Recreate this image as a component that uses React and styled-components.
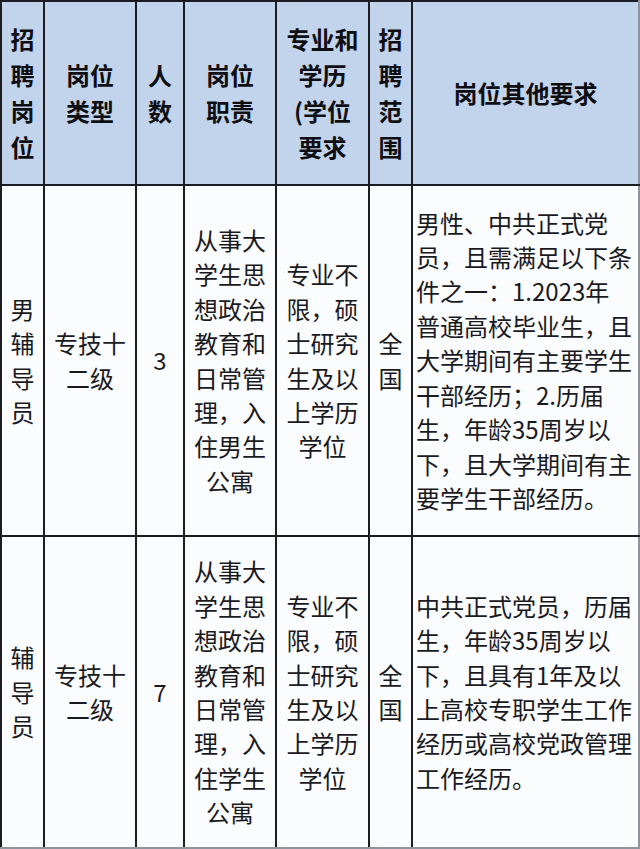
import React from "react";
import styled, { createGlobalStyle } from "styled-components";

const GlobalStyle = createGlobalStyle`
  html, body {
    margin: 0;
    padding: 0;
    background: #ffffff;
  }
  body {
    font-family: "Noto Sans CJK SC", "Noto Sans", sans-serif;
  }
`;

const Table = styled.table`
  width: 638px;
  border-collapse: collapse;
  table-layout: fixed;
  margin: 0;
`;

const HeadRow = styled.tr`
  height: 184px;
  background: #c2d3ec;
`;

const BodyRow = styled.tr`
  height: ${(p) => p.$h}px;
  background: #fbfcfe;
`;

const Th = styled.th`
  border: 2px solid #1c1c22;
  padding: 0;
  font-size: 24px;
  line-height: 36px;
  font-weight: 700;
  color: #0e0e12;
  text-align: center;
  vertical-align: middle;

  &:last-child {
    border-right-color: #8e939c;
  }
`;

const Td = styled.td`
  border: 2px solid #1c1c22;
  padding: 0;
  padding-left: ${(p) => (p.$left ? "3px" : "0")};
  font-size: 24px;
  line-height: 34.4px;
  font-weight: 400;
  color: #1a1a1e;
  text-align: ${(p) => (p.$left ? "left" : "center")};
  vertical-align: middle;
  white-space: nowrap;

  &:last-child {
    border-right-color: #8e939c;
  }

  tr:last-child > & {
    border-bottom-color: #8e939c;
  }
`;

const Line = styled.span`
  display: block;
`;

const Lines = ({ items }) => items.map((t, i) => <Line key={i}>{t}</Line>);

const widths = [43, 92, 48, 92, 93, 43, 227];

const headers = [
  ["招", "聘", "岗", "位"],
  ["岗位", "类型"],
  ["人", "数"],
  ["岗位", "职责"],
  ["专业和", "学历", "(学位", "要求"],
  ["招", "聘", "范", "围"],
  ["岗位其他要求"],
];

const rows = [
  {
    h: 351,
    cells: [
      ["男", "辅", "导", "员"],
      ["专技十", "二级"],
      ["3"],
      ["从事大", "学生思", "想政治", "教育和", "日常管", "理，入", "住男生", "公寓"],
      ["专业不", "限，硕", "士研究", "生及以", "上学历", "学位"],
      ["全", "国"],
      [
        "男性、中共正式党",
        "员，且需满足以下条",
        "件之一：1.2023年",
        "普通高校毕业生，且",
        "大学期间有主要学生",
        "干部经历；2.历届",
        "生，年龄35周岁以",
        "下，且大学期间有主",
        "要学生干部经历。",
      ],
    ],
  },
  {
    h: 312,
    cells: [
      ["辅", "导", "员"],
      ["专技十", "二级"],
      ["7"],
      ["从事大", "学生思", "想政治", "教育和", "日常管", "理，入", "住学生", "公寓"],
      ["专业不", "限，硕", "士研究", "生及以", "上学历", "学位"],
      ["全", "国"],
      [
        "中共正式党员，历届",
        "生，年龄35周岁以",
        "下，且具有1年及以",
        "上高校专职学生工作",
        "经历或高校党政管理",
        "工作经历。",
      ],
    ],
  },
];

export default function App() {
  return (
    <>
      <GlobalStyle />
      <Table>
        <colgroup>
          {widths.map((w, i) => (
            <col key={i} style={{ width: w }} />
          ))}
        </colgroup>
        <thead>
          <HeadRow>
            {headers.map((h, i) => (
              <Th key={i}>
                <Lines items={h} />
              </Th>
            ))}
          </HeadRow>
        </thead>
        <tbody>
          {rows.map((r, ri) => (
            <BodyRow key={ri} $h={r.h}>
              {r.cells.map((c, ci) => (
                <Td key={ci} $left={ci === 6}>
                  <Lines items={c} />
                </Td>
              ))}
            </BodyRow>
          ))}
        </tbody>
      </Table>
    </>
  );
}
